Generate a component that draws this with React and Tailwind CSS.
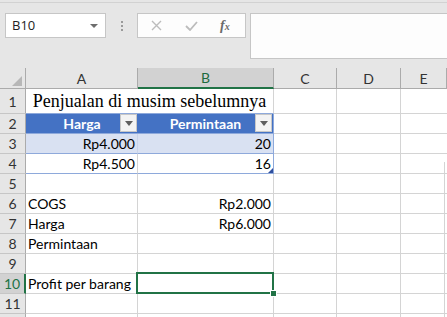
import React from 'react'

const cols = ["A", "B", "C", "D", "E"]

const rows = [
    { n: 1, a: "", b: "" },
    { n: 2 },
    { n: 3, a: "Rp4.000", b: "20" },
    { n: 4, a: "Rp4.500", b: "16" },
    { n: 5, a: "", b: "" },
    { n: 6, a: "COGS", b: "Rp2.000" },
    { n: 7, a: "Harga", b: "Rp6.000" },
    { n: 8, a: "Permintaan", b: "" },
    { n: 9, a: "", b: "" },
    { n: 10, a: "Profit per barang", b: "" },
    { n: 11, a: "", b: "" },
    { n: 12, a: "", b: "" },
]

function FilterBtn() {
    return (
        <div className="absolute right-[1px] top-[0px] w-[17px] h-[18px] bg-[#f3f3f3] border border-[#c8c8c8] flex items-center justify-center">
            <svg width="8" height="5" viewBox="0 0 8 5"><path d="M0 0h8L4 5z" fill="#5f5f5f" /></svg>
        </div>
    )
}

function App() {
    return (
        <div className="w-[447px] h-[317px] overflow-hidden bg-white relative select-none" style={{ fontFamily: "Lato, sans-serif" }}>
            {/* ribbon / formula bar */}
            <div className="h-[68px] bg-[#e6e6e6] pt-[2px]">
                <div className="border-t border-[#d2d2d2] pt-[10px] flex items-start">
                    <div className="ml-[5px] w-[101px] h-[25px] bg-white border border-[#c6c6c6] flex items-center justify-between pl-[6px] pr-[7px]">
                        <span className="text-[13px] text-[#222]" style={{ fontFamily: "'Open Sans', sans-serif" }}>B10</span>
                        <svg width="8" height="4" viewBox="0 0 8 4"><path d="M0 0h8L4 4z" fill="#6d6d6d" /></svg>
                    </div>
                    <div className="w-[31px] h-[25px] flex flex-col items-center justify-center gap-[2px]">
                        <div className="w-[2px] h-[2px] bg-[#9a9a9a]"></div>
                        <div className="w-[2px] h-[2px] bg-[#9a9a9a]"></div>
                        <div className="w-[2px] h-[2px] bg-[#9a9a9a]"></div>
                    </div>
                    <div className="w-[109px] h-[25px] bg-[#fdfdfd] border border-[#c6c6c6] flex items-center">
                        <svg className="ml-[13px]" width="11" height="11" viewBox="0 0 11 11"><path d="M1 1l9 9M10 1l-9 9" stroke="#bcbcbc" strokeWidth="1.4" fill="none" /></svg>
                        <svg className="ml-[23px]" width="13" height="10" viewBox="0 0 13 10"><path d="M1 5l4 4 7-8" stroke="#bcbcbc" strokeWidth="1.8" fill="none" /></svg>
                        <span className="ml-[22px] text-[14px] italic font-bold text-[#6a6a6a] leading-none" style={{ fontFamily: "'Liberation Serif', serif" }}>f<span className="text-[10px]">x</span></span>
                    </div>
                    <div className="ml-[4px] flex-1 h-[46px] bg-[#fdfdfd] border border-[#c6c6c6] border-r-0"></div>
                </div>
            </div>

            {/* sheet */}
            <div className="grid grid-cols-[26px_112px_136px_63px_64px_1fr] grid-rows-[21px_25px_repeat(11,20px)] text-[14px] text-black">
                {/* column headers */}
                <div className="bg-[#e6e6e6] border-r border-b border-[#ababab] relative">
                    <svg className="absolute right-[3px] bottom-[2px]" width="10" height="10" viewBox="0 0 10 10"><path d="M10 0v10H0z" fill="#b7b7b7" /></svg>
                </div>
                {cols.map(c => (
                    <div key={c} className={`flex items-center justify-center border-r text-[14px] ${c === "B" ? "bg-[#d2d2d2] text-[#1e6b3f] border-b-2 border-b-[#217346] border-r-[#ababab]" : "bg-[#e6e6e6] text-[#333] border-b border-[#ababab]"}`}>
                        {c}
                    </div>
                ))}

                {rows.map(r => {
                    const sel = r.n === 10
                    const head = (
                        <div key={"h" + r.n} className={`flex items-center justify-center text-[14px] border-b border-[#c6c6c6] ${sel ? "bg-[#d2d2d2] text-[#217346] border-r-2 border-r-[#217346]" : "bg-[#e6e6e6] text-[#333] border-r border-r-[#ababab]"}`}>
                            {r.n < 12 ? r.n : ""}
                        </div>
                    )
                    let ab
                    if (r.n === 1) {
                        ab = (
                            <div key="t" className="col-span-2 flex items-center justify-center border-r border-r-[#d4d4d4] border-b border-b-[#8ea9db] text-[18px] whitespace-nowrap" style={{ fontFamily: "'Liberation Serif', serif" }}>
                                Penjualan di musim sebelumnya
                            </div>
                        )
                    } else if (r.n === 2) {
                        ab = [
                            <div key="a" className="relative bg-[#4472c4] border-b border-[#8ea9db] flex items-center justify-center text-white font-bold text-[14px]">
                                Harga
                                <FilterBtn />
                            </div>,
                            <div key="b" className="relative bg-[#4472c4] border-b border-r border-[#8ea9db] flex items-center justify-center text-white font-bold text-[14px]">
                                Permintaan
                                <FilterBtn />
                            </div>,
                        ]
                    } else if (r.n === 3 || r.n === 4) {
                        const bg = r.n === 3 ? "bg-[#d9e1f2]" : "bg-white"
                        ab = [
                            <div key="a" className={`${bg} border-b border-b-[#8ea9db] border-r ${r.n === 3 ? "border-r-[#c9d4ea]" : "border-r-[#d4d4d4]"} flex items-center justify-end pr-[2px]`}>{r.a}</div>,
                            <div key="b" className={`${bg} relative border-b border-r border-[#8ea9db] flex items-center justify-end pr-[2px]`}>
                                {r.b}
                                {r.n === 4 && <svg className="absolute right-0 bottom-0" width="5" height="5" viewBox="0 0 5 5"><path d="M5 0v5H0z" fill="#2f4f9e" /></svg>}
                            </div>,
                        ]
                    } else {
                        ab = [
                            <div key="a" className="border-r border-b border-[#d4d4d4] flex items-center pl-[2px] whitespace-nowrap overflow-visible">{r.a}</div>,
                            <div key="b" className="border-r border-b border-[#d4d4d4] flex items-center justify-end pr-[2px] relative">
                                {r.b}
                                {sel && (
                                    <div className="absolute left-[-2px] top-[-2px] right-[-1px] bottom-[-1px] border-2 border-[#217346] z-10">
                                        <div className="absolute right-[-5px] bottom-[-5px] w-[7px] h-[7px] bg-[#217346] border border-white"></div>
                                    </div>
                                )}
                            </div>,
                        ]
                    }
                    return (
                        <React.Fragment key={r.n}>
                            {head}
                            {ab}
                            <div className="border-r border-b border-[#d4d4d4]"></div>
                            <div className="border-r border-b border-[#d4d4d4]"></div>
                            <div className="border-b border-[#d4d4d4] relative">
                                {r.n >= 4 && <div className={`absolute right-[2px] bottom-[-1px] w-px bg-[#d4d4d4] ${r.n === 4 ? "h-[12px]" : "top-[-1px]"}`}></div>}
                            </div>
                        </React.Fragment>
                    )
                })}
            </div>
        </div>
    )
}

export default App
